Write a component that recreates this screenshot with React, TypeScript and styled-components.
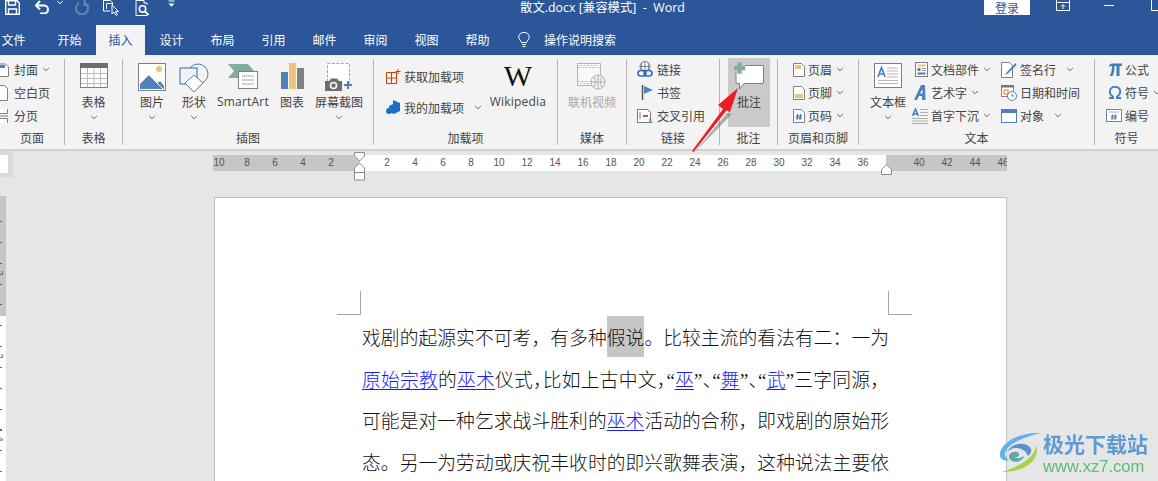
import React from "react";
import styled, { createGlobalStyle } from "styled-components";

const Global = createGlobalStyle`
  html, body { margin: 0; padding: 0; width: 1158px; height: 481px; overflow: hidden; background: #e6e6e6; }
  #root { width: 1158px; height: 481px; overflow: hidden; }
  svg { display: block; flex: none; }
`;
const UI = `"Noto Sans CJK SC", "Liberation Sans", sans-serif`;
const Shell = styled.div`position: relative; width: 1158px; height: 481px; overflow: hidden; font-family: ${UI}; font-size: 12px; color: #444;`;
const TitleBar = styled.div`height: 25px; background: #2b579a; display: flex; align-items: flex-start; color: #fff; overflow: hidden; & > * { flex: none; }`;
const Qat = styled.div`width: 520px; height: 16px; display: flex; align-items: flex-start;`;
const QatSlot = styled.div<{ $ml: number; $w: number }>`margin-left: ${p => p.$ml}px; width: ${p => p.$w}px; display: flex; justify-content: center;`;
const DocTitle = styled.div`width: 464px; height: 16px; line-height: 16px; white-space: pre; font-family: "Open Sans", "Noto Sans CJK SC", sans-serif; font-size: 12.4px;`;
const Login = styled.div`width: 46px; height: 15px; line-height: 15px; background: #fff; color: #2b579a; text-align: center;`;
const WinSlot = styled.div<{ $ml: number }>`margin-left: ${p => p.$ml}px; height: 12px; display: flex; align-items: flex-start;`;

const TabRow = styled.div`height: 30px; background: #2b579a; display: flex; overflow: hidden;`;
const Tab = styled.div<{ $active?: boolean; $first?: boolean }>`
  width: ${p => (p.$active ? 49 : 51)}px;
  margin-left: ${p => (p.$first ? -12 : p.$active ? 1 : 0)}px;
  margin-right: ${p => (p.$first ? 5 : p.$active ? 1 : 0)}px;
  flex: none; text-align: center; line-height: 29px;
  background: ${p => (p.$active ? "#f3f3f3" : "transparent")};
  color: ${p => (p.$active ? "#2b579a" : "#fff")};
`;
const TellMe = styled.div`display: flex; align-items: center; height: 29px; color: #fff; margin-left: 15px; gap: 14px;`;

const Ribbon = styled.div`height: 94px; background: #f3f3f3; display: flex;`;
const Group = styled.div<{ $w: number }>`width: ${p => p.$w}px; flex: none; display: flex; flex-direction: column; padding-top: 3px; box-sizing: border-box;`;
const GroupBody = styled.div<{ $pl?: number }>`height: 71px; display: flex; padding-left: ${p => p.$pl ?? 0}px; box-sizing: border-box;`;
const GroupLabel = styled.div`height: 18px; line-height: 18px; text-align: center; white-space: nowrap;`;
const Sep = styled.div`width: 1px; flex: none; margin: 4px 0; background: #b5b5b5;`;
const Large = styled.div<{ $w: number; $hot?: boolean; $off?: boolean; $ml?: number }>`
  width: ${p => p.$w}px; height: 69px; flex: none; display: flex; flex-direction: column; align-items: center;
  box-sizing: border-box; padding-top: 5px; margin-left: ${p => p.$ml ?? 0}px;
  background: ${p => (p.$hot ? "#cacaca" : "transparent")};
  color: ${p => (p.$off ? "#a6a6a6" : "inherit")};
`;
const LargeIcon = styled.div`height: 28px; display: flex; align-items: flex-start; justify-content: center;`;
const LargeText = styled.div<{ $latin?: boolean }>`
  margin-top: 2px; height: 18px; line-height: 18px; white-space: nowrap;
  font-family: ${p => (p.$latin ? `"Open Sans", sans-serif` : "inherit")};
  letter-spacing: ${p => (p.$latin ? "0.2px" : "0")};
`;
const ChevBox = styled.div`height: 12px; display: flex; align-items: center; justify-content: center;`;
const WikiMark = styled.div`font: 400 30px/26px "Liberation Serif", serif; color: #111;`;
const CommentShift = styled.div`margin-top: -2px;`;
const Col = styled.div<{ $w?: number; $pt?: number }>`
  ${p => (p.$w ? `width: ${p.$w}px; flex: none;` : "")}
  padding-top: ${p => p.$pt ?? 0}px; display: flex; flex-direction: column;
`;
const Row = styled.div<{ $h?: number }>`height: ${p => p.$h ?? 23}px; display: flex; align-items: center; white-space: nowrap;`;
const Slot = styled.div<{ $w: number }>`width: ${p => p.$w}px; flex: none; display: flex; justify-content: flex-end; padding-right: 3px; box-sizing: border-box;`;
const ChevGap = styled.span<{ $g: number }>`margin-left: ${p => p.$g}px;`;

const Work = styled.div`height: 332px; background: #e6e6e6; border-top: 2px solid #d2d2d2; box-sizing: border-box; position: relative;`;
const RulerRow = styled.div`height: 46px; display: flex; align-items: flex-start;`;
const Corner = styled.div`width: 8px; height: 18px; background: #fff; border: 4px solid #d9d9d9; border-right-width: 5px; border-left: 0; flex: none;`;
const HRuler = styled.div`position: relative; margin-left: 200px; margin-top: 4px; width: 794px; height: 16px; display: flex; flex: none; color: #555; font-family: "Liberation Sans", sans-serif; font-size: 10px;`;
const RulerPart = styled.div<{ $w: number; $light?: boolean; $pl: number }>`
  width: ${p => p.$w}px; flex: none; height: 16px; display: flex; overflow: hidden; padding-left: ${p => p.$pl}px; box-sizing: border-box;
  background: ${p => (p.$light ? "#fff" : "#c6c6c6")};
`;
const Num = styled.div<{ $pull?: boolean }>`width: 28px; flex: none; text-align: center; line-height: 16px; margin-left: ${p => (p.$pull ? -8 : 0)}px;`;
const Marker = styled.div<{ $x: number; $y: number }>`position: absolute; left: ${p => p.$x}px; top: ${p => p.$y}px;`;
const Body = styled.div`display: flex; align-items: flex-start;`;
const VRuler = styled.div`position: relative; width: 6px; height: 285px; flex: none; margin-right: 208px; margin-top: -1px; overflow: hidden;
  background:
    repeating-linear-gradient(to bottom, transparent 0 4px, #666 4px 5px, transparent 5px 20.85px) 0 21px / 2px 100% no-repeat,
    linear-gradient(to bottom, #c6c6c6 0 120px, #fff 120px);
`;
const VNum = styled.div<{ $y: number }>`position: absolute; left: -3px; top: ${p => p.$y}px; font: 9px "Liberation Sans", sans-serif; color: #555; transform: rotate(90deg);`;
const Page = styled.div`position: relative; width: 793px; height: 290px; flex: none; background: #fff; border: 1px solid #c0c0c0; border-bottom: 0; box-sizing: border-box; padding: 120px 117px 0 147px;
  font-family: "Liberation Serif", "Noto Sans CJK SC", serif; font-size: 18.75px; color: #111; font-weight: 300;`;
const CropMark = styled.div<{ $right?: boolean }>`
  position: absolute; top: 93px; width: 23px; height: 23px;
  ${p => (p.$right ? "left: 673px; border-left: 1px solid #a6a6a6;" : "left: 122px; border-right: 1px solid #a6a6a6;")}
  border-bottom: 1px solid #a6a6a6;
`;
const Line = styled.div<{ $halt?: boolean }>`height: 41.6px; line-height: 41.6px; white-space: nowrap; text-align: justify; text-align-last: justify; text-justify: inter-character;
  ${p => (p.$halt ? `font-feature-settings: "halt";` : "")}
`;
const FullPunct = styled.span`font-feature-settings: normal;`;
const Link = styled.span`color: #1a1aff; text-decoration: underline; text-underline-offset: 2px;`;
const Selected = styled.span`background: #c6c6c6; padding: 12px 0 8px;`;
const ArrowLayer = styled.div`position: absolute; left: 680px; top: 80px; pointer-events: none;`;
const Brand = styled.div`position: absolute; left: 998px; top: 431px; display: flex; gap: 1px; filter: blur(0.3px);`;
const BrandText = styled.div`display: flex; flex-direction: column;`;
const BrandCn = styled.div`font-size: 21px; line-height: 24px; font-weight: 700; color: #5f9bd3; white-space: nowrap;`;
const BrandUrl = styled.div`font: 16.6px/18px "Liberation Sans", sans-serif; color: #5dbb7b; margin-top: 3px;`;

const Chev = ({ c = "#666" }: { c?: string }) => (
  <svg width="8" height="5" viewBox="0 0 8 5"><path d="M1.2 1 4 3.8 6.8 1" fill="none" stroke={c} strokeWidth="1" /></svg>
);
const W = "#fff";
const SaveIco = () => (
  <svg width="15" height="15" viewBox="0 0 15 15"><path d="M.7.7H12L14.3 3V14.3H.7Z" fill="none" stroke={W} strokeWidth="1.4" /><path d="M3.5 1v4h7V1M3.5 14V9h8v5" fill="none" stroke={W} strokeWidth="1.4" /></svg>
);
const UndoIco = () => (
  <svg width="14" height="14" viewBox="0 0 14 14"><path d="M1 5.5h8a4 4 0 0 1 0 8H5" fill="none" stroke={W} strokeWidth="2" /><path d="M5 1 1 5.5 5 9.5" fill="none" stroke={W} strokeWidth="2" /></svg>
);
const RedoIco = () => (
  <svg width="14" height="15" viewBox="0 0 14 15"><path d="M10 3a6 6 0 1 1-6 0" fill="none" stroke="#6584b2" strokeWidth="2" /><path d="M9.5 0v5h4" fill="none" stroke="#6584b2" strokeWidth="2" /></svg>
);
const TouchIco = () => (
  <svg width="17" height="16" viewBox="0 0 17 16"><path d="M.5.5h7l2 2v2.500M7 11H.5V.5" fill="none" stroke={W} /><path d="M3.500 3.500h6v2M3.500 3.500V9" fill="none" stroke={W} /><path d="M9 5v9l2-2 2 3.500 1.500-1-2-3h3Z" fill="#2b579a" stroke={W} /></svg>
);
const PreviewIco = () => (
  <svg width="15" height="16" viewBox="0 0 15 16"><path d="M9 .5H1v15h11" fill="none" stroke={W} /><path d="M9 .5V3h3v2" fill="none" stroke={W} /><circle cx="7.500" cy="9" r="3.200" fill="none" stroke={W} strokeWidth="1.500" /><path d="M10 11.500 13.500 15" stroke={W} strokeWidth="2" /></svg>
);
const MoreIco = () => (
  <svg width="7" height="8" viewBox="0 0 7 8"><path d="M.5 1h6" stroke={W} /><path d="M.5 3.500h6L3.500 6.800Z" fill={W} /></svg>
);
const RibbonDispIco = () => (
  <svg width="14" height="11" viewBox="0 0 14 11"><path d="M.5 0v10.500h13V0M.5 2.500h13M7 9V5M5 6.500 7 4.500l2 2" fill="none" stroke={W} /></svg>
);
const MinIco = () => <svg width="11" height="6" viewBox="0 0 11 6"><path d="M0 5.500h10" stroke={W} /></svg>;
const MaxIco = () => <svg width="11" height="11" viewBox="0 0 11 11"><path d="M.5 0v10.500h10V0" fill="none" stroke={W} /></svg>;
const BulbIco = () => (
  <svg width="12" height="16" viewBox="0 0 12 16"><path d="M3.500 10.500C3 8.500.7 7.500.7 5a5.200 4.500 0 0 1 10.600 0C11.300 7.500 9 8.500 8.500 10.500Z" fill="none" stroke={W} /><path d="M4 12.500h4M4.500 14.500h3" stroke={W} /></svg>
);

const CoverIco = () => <svg width="16" height="14" viewBox="0 0 16 14"><path d="M.5 1h10l3 3v9.500H.5Z" fill="#fff" stroke="#808080" /><path d="M2 2h8v3H2Z" fill="#4f81bd" /></svg>;
const BlankIco = () => <svg width="16" height="16" viewBox="0 0 16 16"><path d="M.5.5h9l3 3v12H.5Z" fill="#fff" stroke="#808080" /></svg>;
const BreakIco = () => <svg width="16" height="14" viewBox="0 0 16 14"><path d="M.5 0v4.500h12V0M.5 14V9.500h12V14M0 7h13" fill="#fff" stroke="#808080" /></svg>;
const TableIco = () => (
  <svg width="28" height="26" viewBox="0 0 28 26"><rect x=".5" y=".5" width="27" height="24" fill="#fff" stroke="#7f7f7f" /><rect y="0" width="28" height="5" fill="#6d6d6d" /><path d="M1 10.500h26M1 15.500h26M1 20.500h26M7.500 5v19M14 5v19M20.500 5v19" stroke="#c4b9ae" /></svg>
);
const PicIco = () => (
  <svg width="28" height="28" viewBox="0 0 28 28"><rect x=".5" y=".5" width="27" height="27" fill="#fff" stroke="#7f7f7f" /><circle cx="21" cy="6" r="3" fill="#efc26e" /><path d="M2 26V21L11 12 20 20 22 18 26 23V26Z" fill="#4f81bd" /><path d="M11 12 25 26" stroke="#fff" /></svg>
);
const ShapeIco = () => (
  <svg width="30" height="30" viewBox="0 0 30 30"><circle cx="19" cy="11" r="10" fill="#f3f3f3" stroke="#4f81bd" /><rect x="1" y="5" width="17" height="16" fill="#f3f3f3" stroke="#4f81bd" strokeWidth="1.200" /><path d="M15 12 24 20 15 29 6 20Z" fill="#fff" stroke="#4f81bd" /></svg>
);
const SmartArtIco = () => (
  <svg width="30" height="26" viewBox="0 0 30 26"><path d="M0 1H20L26 8H10L12 10V15H0L6 8Z" fill="#7fae9c" /><rect x="10.500" y="8.500" width="19" height="17" fill="#fff" stroke="#808080" /><path d="M14 13h12M14 17h12M14 21h12" stroke="#888" strokeDasharray="1.500 .5" /></svg>
);
const ChartIco = () => (
  <svg width="23" height="26" viewBox="0 0 23 26"><rect y="9" width="7" height="17" fill="#4f81bd" /><rect x="8" width="7" height="26" fill="#edc27a" /><rect x="16" y="5" width="7" height="21" fill="#808080" /></svg>
);
const ShotIco = () => (
  <svg width="29" height="28" viewBox="0 0 29 28"><rect x="2.500" y=".5" width="22" height="21" fill="#fff" stroke="#a6a6a6" strokeDasharray="3 1.500" /><path d="M0 18h4l2-2.500h6l2 2.500h3v10H0Z" fill="#6d6d6d" /><circle cx="8.500" cy="22.500" r="3" fill="#6d6d6d" stroke="#fff" strokeWidth="1.500" /><path d="M23 18v8M19 22h8" stroke="#4f81bd" strokeWidth="2" /></svg>
);
const StoreIco = () => (
  <svg width="15" height="15" viewBox="0 0 15 15"><path d="M.5 3.500h10v11H.5ZM.5 9h10M5.500 3.500v11" fill="none" stroke="#d83b01" /><path d="M12 0v5M9.500 2.500h5" stroke="#d83b01" /></svg>
);
const MyAddIco = () => (
  <svg width="15" height="15" viewBox="0 0 15 15"><path d="M7 0 14 3V11L8 14 3 12V6L7 4Z" fill="#1f6fbf" /><circle cx="3" cy="11" r="3" fill="#1f6fbf" /></svg>
);
const VideoIco = () => (
  <svg width="30" height="28" viewBox="0 0 30 28"><rect x=".5" y=".5" width="23" height="22" fill="#f8f8f8" stroke="#b5b5b5" /><path d="M1 4.500h22M1 18.500h22M3 2.500h18M3 20.500h12" stroke="#bdbdbd" strokeDasharray="2 1.500" /><circle cx="21" cy="19" r="7" fill="#f3f3f3" stroke="#b0b0b0" /><path d="M14 19h14M21 12v14M17 14c2 3 2 7 0 10M25 14c-2 3-2 7 0 10" fill="none" stroke="#b0b0b0" /></svg>
);
const LinkIco = () => (
  <svg width="17" height="17" viewBox="0 0 17 17"><circle cx="8" cy="5.500" r="5" fill="#fff" stroke="#808080" /><path d="M3 5.500h10M8 .5v10M5 1.500c-1 3-1 5 0 8M11 1.500c1 3 1 5 0 8" fill="none" stroke="#808080" /><rect x="1" y="9.500" width="8" height="5.500" rx="2.700" fill="none" stroke="#2f6db5" strokeWidth="1.600" /><rect x="7" y="9.500" width="8" height="5.500" rx="2.700" fill="none" stroke="#2f6db5" strokeWidth="1.600" /></svg>
);
const FlagIco = () => (
  <svg width="13" height="16" viewBox="0 0 13 16"><path d="M1.500 0v15" stroke="#555" strokeWidth="1.500" /><path d="M3 1 12 5 3 9Z" fill="#4f81bd" /></svg>
);
const XrefIco = () => (
  <svg width="17" height="16" viewBox="0 0 17 16"><path d="M.5 1.500h10l3 3V14.500H.5Z" fill="#fff" stroke="#777" /><path d="M6 8h5" stroke="#d0492a" strokeWidth="2" /><path d="M3 4v7" stroke="#777" /><path d="M13 10v4h3" fill="none" stroke="#777" /></svg>
);
const CommentIco = () => (
  <svg width="32" height="30" viewBox="0 0 32 30">
    <path d="M4 4.500H29q1.500 0 1.500 1.500V21q0 1.500-1.500 1.500H11L6.500 28V22.500H4q-1 0-1-1.500V6q0-1.500 1-1.500Z" fill="#fff" stroke="#808080" />
    <path d="M6.500 1v12M.5 7h12" stroke="#c4d8d0" strokeWidth="5.500" />
    <path d="M6.500 1.500v11M1 7h11" stroke="#7fae9c" strokeWidth="4" />
  </svg>
);
const HeaderIco = () => <svg width="12" height="14" viewBox="0 0 12 14"><path d="M.5.5h8l3 3v10H.5Z" fill="#fff" stroke="#808080" /><rect x="2" y="2" width="6" height="4" fill="#edc27a" /></svg>;
const FooterIco = () => <svg width="12" height="14" viewBox="0 0 12 14"><path d="M.5.5h8l3 3v10H.5Z" fill="#fff" stroke="#808080" /><rect x="2" y="8" width="8" height="4" fill="#edc27a" /></svg>;
const PageNumIco = () => <svg width="12" height="14" viewBox="0 0 12 14"><path d="M.5.5h8l3 3v10H.5Z" fill="#fff" stroke="#808080" /><path d="M4.500 5 4 11M7.500 5 7 11M3 7h6M3 9h6" stroke="#2f6db5" /></svg>;
const TextBoxIco = () => (
  <svg width="28" height="26" viewBox="0 0 28 26"><rect x=".5" y=".5" width="27" height="24" fill="#fff" stroke="#7f7f7f" /><path d="M4 14 7.500 4.500 11 14M5 11h5" fill="none" stroke="#3f7fc0" strokeWidth="1.600" /><path d="M13 5h11M13 8h11M13 11h11M13 14h11M4 17.500h20M4 20.500h20" stroke="#b8b8b8" /></svg>
);
const PartsIco = () => (
  <svg width="13" height="15" viewBox="0 0 13 15"><rect x=".5" y=".5" width="12" height="14" fill="#fff" stroke="#808080" /><rect x="2.500" y="2.500" width="8" height="2" fill="#edc27a" /><rect x="2.500" y="6" width="3" height="3" fill="#777" /><path d="M7 6.500h4M7 8.500h4" stroke="#999" /><rect x="2.500" y="10.500" width="8" height="2" fill="#3f7fc0" /></svg>
);
const ArtIco = () => (
  <svg width="15" height="15" viewBox="0 0 15 15"><path d="M1 15 8 0h4L12.500 15H9V11H6L4 15Z" fill="#4f81bd" /><path d="M7 8.500h2.500V4Z" fill="#f3f3f3" /></svg>
);
const DropIco = () => (
  <svg width="16" height="16" viewBox="0 0 16 16"><path d="M.5 8 3.500 1 6.500 8M1.500 6h4" fill="none" stroke="#3f7fc0" strokeWidth="1.500" /><path d="M8 1.500h8M8 4.500h8M8 7.500h8M0 10.500h16M0 13h16M0 15.500h16" stroke="#b0b0b0" /></svg>
);
const SignIco = () => (
  <svg width="16" height="16" viewBox="0 0 16 16"><path d="M.5.500h8l3 3V15.500H.5Z" fill="#fff" stroke="#808080" /><path d="M14.500 1 6 10 4 13 7 11.500 15.500 3Z" fill="#4f81bd" /></svg>
);
const DateIco = () => (
  <svg width="16" height="16" viewBox="0 0 16 16"><rect x=".5" y=".5" width="12" height="11" fill="#fff" stroke="#808080" /><rect y="0" width="13" height="2.500" fill="#777" /><rect x="3" y="5" width="4" height="4" fill="#fff" stroke="#e07b20" /><circle cx="11" cy="11" r="4.500" fill="#fff" stroke="#4f81bd" /><path d="M11 8.500V11h2" fill="none" stroke="#4f81bd" /></svg>
);
const ObjIco = () => (
  <svg width="16" height="14" viewBox="0 0 16 14"><rect x=".5" y=".5" width="15" height="13" fill="#fff" stroke="#4f81bd" /><rect width="16" height="4" fill="#4f81bd" /></svg>
);
const PiIco = () => (
  <svg width="13" height="13" viewBox="0 0 13 13"><path d="M0 2.500Q1 .5 3 .5H13V3H10.500V13H7.500V3H5.500C5.500 7 5 11 3.500 13H.8C2.300 10 3 7 3 3 1.500 3 1 3.500 .5 4Z" fill="#3f7fc0" /></svg>
);
const OmegaIco = () => (
  <svg width="14" height="13" viewBox="0 0 14 13"><path d="M1 12H5V10.500C3 9.500 1.800 8 1.800 5.500 1.800 2.500 4 .9 7 .9S12.200 2.500 12.200 5.500C12.200 8 11 9.500 9 10.500V12H13" fill="none" stroke="#3f7fc0" strokeWidth="1.800" /></svg>
);
const NumIco = () => (
  <svg width="16" height="13" viewBox="0 0 16 13"><rect x=".5" y=".5" width="15" height="12" fill="#fff" stroke="#808080" /><path d="M3 3h10" stroke="#aaa" /><path d="M6.500 5.500 6 11M9.500 5.500 9 11M5 7h6M5 9h6" stroke="#3f7fc0" /></svg>
);
const FirstMarker = () => (
  <svg width="12" height="29" viewBox="0 0 12 29"><path d="M.5.500h10V4L5.500 9 .5 4Z" fill="#fff" stroke="#8c8c8c" /><path d="M5.500 11 .5 16v12h10V16Z" fill="#fff" stroke="#8c8c8c" /><path d="M.5 20.500h10" stroke="#8c8c8c" /></svg>
);
const RightMarker = () => (
  <svg width="12" height="11" viewBox="0 0 12 11"><path d="M5.500.5 .5 5.500v5h10v-5Z" fill="#fff" stroke="#8c8c8c" /></svg>
);
const Arrow = () => (
  <svg width="70" height="76" viewBox="0 0 70 76">
    <path d="M14 73 47 33 51 33 50 36Z" fill="#666" opacity=".5" />
    <path d="M12 71 43 29 38 25 58 8 50 32 46.500 30.500 13.500 72Z" fill="#ee1c25" />
  </svg>
);
const Swirl = () => (
  <svg width="44" height="42" viewBox="0 0 44 42">
    <path d="M43 2C26 1 8 8 3 19c-4 8 3 12 8 10C4 26 7 17 16 12 24 7 35 4 43 2Z" fill="#62b2e8" />
    <path d="M9 21c3-7 13-10 20-7 6 3 5 8 1 11-2-5-6-8-12-8-4 0-7 2-9 4Z" fill="#5f8fd0" />
    <path d="M12 23c3-3 8-3 9 0 1 2-2 4-5 3 3 2 7 1 10-1-1 5-8 7-12 5-3-2-4-5-2-7Z" fill="#5fa7a8" />
    <path d="M38 14C38 24 26 34 4 41c8 0 22-2 30-10 5-5 6-12 4-17Z" fill="#a8d04e" />
  </svg>
);

const Small = ({ icon, slot, text, gap, h }: { icon: React.ReactNode; slot: number; text: string; gap?: number; h?: number }) => (
  <Row $h={h}>
    <Slot $w={slot}>{icon}</Slot>
    {text}
    {gap !== undefined && <ChevGap $g={gap}><Chev /></ChevGap>}
  </Row>
);
const Big = ({ icon, text, w, chev, hot, off, latin, ml }: { icon: React.ReactNode; text: string; w: number; chev?: boolean; hot?: boolean; off?: boolean; latin?: boolean; ml?: number }) => (
  <Large $w={w} $hot={hot} $off={off} $ml={ml}>
    <LargeIcon>{icon}</LargeIcon>
    <LargeText $latin={latin}>{text}</LargeText>
    {chev && <ChevBox><Chev /></ChevBox>}
  </Large>
);

const tabs = ["设计", "布局", "引用", "邮件", "审阅", "视图", "帮助"];
const left = ["10", "8", "6", "4", "2"];
const mid = Array.from({ length: 18 }, (_, i) => String((i + 1) * 2));
const right = ["40", "42", "44", "46"];

export default function App() {
  return (
    <Shell>
      <Global />
      <TitleBar>
        <Qat>
          <QatSlot $ml={5} $w={15}><SaveIco /></QatSlot>
          <QatSlot $ml={15} $w={14}><UndoIco /></QatSlot>
          <QatSlot $ml={7} $w={8}><Chev c="#fff" /></QatSlot>
          <QatSlot $ml={11} $w={14}><RedoIco /></QatSlot>
          <QatSlot $ml={14} $w={17}><TouchIco /></QatSlot>
          <QatSlot $ml={15} $w={15}><PreviewIco /></QatSlot>
          <QatSlot $ml={18} $w={7}><MoreIco /></QatSlot>
        </Qat>
        <DocTitle>{"散文.docx [兼容模式]  -  Word"}</DocTitle>
        <Login>登录</Login>
        <WinSlot $ml={26}><RibbonDispIco /></WinSlot>
        <WinSlot $ml={34}><MinIco /></WinSlot>
        <WinSlot $ml={36}><MaxIco /></WinSlot>
      </TitleBar>
      <TabRow>
        <Tab $first>文件</Tab>
        <Tab>开始</Tab>
        <Tab $active>插入</Tab>
        {tabs.map(t => <Tab key={t}>{t}</Tab>)}
        <TellMe><BulbIco />操作说明搜索</TellMe>
      </TabRow>
      <Ribbon>
        <Group $w={64}>
          <GroupBody>
            <Col>
              <Small slot={14} icon={<CoverIco />} text="封面" gap={4} />
              <Small slot={14} icon={<BlankIco />} text="空白页" />
              <Small slot={14} icon={<BreakIco />} text="分页" />
            </Col>
          </GroupBody>
          <GroupLabel>页面</GroupLabel>
        </Group>
        <Sep />
        <Group $w={57}>
          <GroupBody><Big w={57} icon={<TableIco />} text="表格" chev /></GroupBody>
          <GroupLabel>表格</GroupLabel>
        </Group>
        <Sep />
        <Group $w={250}>
          <GroupBody $pl={8}>
            <Big w={42} icon={<PicIco />} text="图片" chev />
            <Big w={42} icon={<ShapeIco />} text="形状" chev />
            <Big w={56} icon={<SmartArtIco />} text="SmartArt" latin />
            <Big w={42} icon={<ChartIco />} text="图表" />
            <Big w={52} icon={<ShotIco />} text="屏幕截图" chev />
          </GroupBody>
          <GroupLabel>插图</GroupLabel>
        </Group>
        <Sep />
        <Group $w={183}>
          <GroupBody $pl={10}>
            <Col $w={100} $pt={3}>
              <Small h={31} slot={20} icon={<StoreIco />} text="获取加载项" />
              <Small h={31} slot={20} icon={<MyAddIco />} text="我的加载项" gap={10} />
            </Col>
            <Big w={68} icon={<WikiMark>W</WikiMark>} text="Wikipedia" latin />
          </GroupBody>
          <GroupLabel>加载项</GroupLabel>
        </Group>
        <Sep />
        <Group $w={68}>
          <GroupBody><Big w={68} off icon={<VideoIco />} text="联机视频" /></GroupBody>
          <GroupLabel>媒体</GroupLabel>
        </Group>
        <Sep />
        <Group $w={92}>
          <GroupBody $pl={11}>
            <Col>
              <Small slot={19} icon={<LinkIco />} text="链接" />
              <Small slot={19} icon={<FlagIco />} text="书签" />
              <Small slot={19} icon={<XrefIco />} text="交叉引用" />
            </Col>
          </GroupBody>
          <GroupLabel>链接</GroupLabel>
        </Group>
        <Sep />
        <Group $w={57}>
          <GroupBody $pl={8}><Big w={42} hot icon={<CommentShift><CommentIco /></CommentShift>} text="批注" /></GroupBody>
          <GroupLabel>批注</GroupLabel>
        </Group>
        <Sep />
        <Group $w={80}>
          <GroupBody $pl={13}>
            <Col>
              <Small slot={17} icon={<HeaderIco />} text="页眉" gap={4} />
              <Small slot={17} icon={<FooterIco />} text="页脚" gap={4} />
              <Small slot={17} icon={<PageNumIco />} text="页码" gap={4} />
            </Col>
          </GroupBody>
          <GroupLabel>页眉和页脚</GroupLabel>
        </Group>
        <Sep />
        <Group $w={235}>
          <GroupBody>
            <Big w={46} ml={6} icon={<TextBoxIco />} text="文本框" chev />
            <Col $w={90}>
              <Small slot={20} icon={<PartsIco />} text="文档部件" gap={4} />
              <Small slot={20} icon={<ArtIco />} text="艺术字" gap={4} />
              <Small slot={20} icon={<DropIco />} text="首字下沉" gap={4} />
            </Col>
            <Col>
              <Small slot={19} icon={<SignIco />} text="签名行" gap={10} />
              <Small slot={19} icon={<DateIco />} text="日期和时间" />
              <Small slot={19} icon={<ObjIco />} text="对象" gap={10} />
            </Col>
          </GroupBody>
          <GroupLabel>文本</GroupLabel>
        </Group>
        <Sep />
        <Group $w={63}>
          <GroupBody $pl={12}>
            <Col>
              <Small slot={18} icon={<PiIco />} text="公式" />
              <Small slot={18} icon={<OmegaIco />} text="符号" gap={4} />
              <Small slot={18} icon={<NumIco />} text="编号" />
            </Col>
          </GroupBody>
          <GroupLabel>符号</GroupLabel>
        </Group>
      </Ribbon>
      <Work>
        <RulerRow>
          <Corner />
          <HRuler>
            <RulerPart $w={147} $pl={0}>
              {left.map((n, i) => <Num key={n} $pull={i === 0}>{n}</Num>)}
            </RulerPart>
            <RulerPart $w={526} $pl={13} $light>
              {mid.filter(n => n !== "38").map(n => <Num key={n}>{n}</Num>)}
            </RulerPart>
            <RulerPart $w={121} $pl={19}>
              {right.map(n => <Num key={n}>{n}</Num>)}
            </RulerPart>
            <Marker $x={141} $y={-3}><FirstMarker /></Marker>
            <Marker $x={668} $y={9}><RightMarker /></Marker>
          </HRuler>
        </RulerRow>
        <Body>
          <VRuler>
            <VNum $y={72}>2</VNum>
            <VNum $y={155}>2</VNum>
            <VNum $y={238}>4</VNum>
          </VRuler>
          <Page>
            <CropMark />
            <CropMark $right />
            <Line>戏剧的起源实不可考，有多种<Selected>假说</Selected>。比较主流的看法有二：一为</Line>
            <Line $halt><Link>原始宗教</Link>的<Link>巫术</Link>仪式，比如上古中文，“<Link>巫</Link>”、“<Link>舞</Link>”、“<Link>武</Link>”三字同源<FullPunct>，</FullPunct></Line>
            <Line>可能是对一种乞求战斗胜利的<Link>巫术</Link>活动的合称，即戏剧的原始形</Line>
            <Line>态。另一为劳动或庆祝丰收时的即兴歌舞表演，这种说法主要依</Line>
          </Page>
        </Body>
      </Work>
      <ArrowLayer><Arrow /></ArrowLayer>
      <Brand>
        <Swirl />
        <BrandText>
          <BrandCn>极光下载站</BrandCn>
          <BrandUrl>www.xz7.com</BrandUrl>
        </BrandText>
      </Brand>
    </Shell>
  );
}
